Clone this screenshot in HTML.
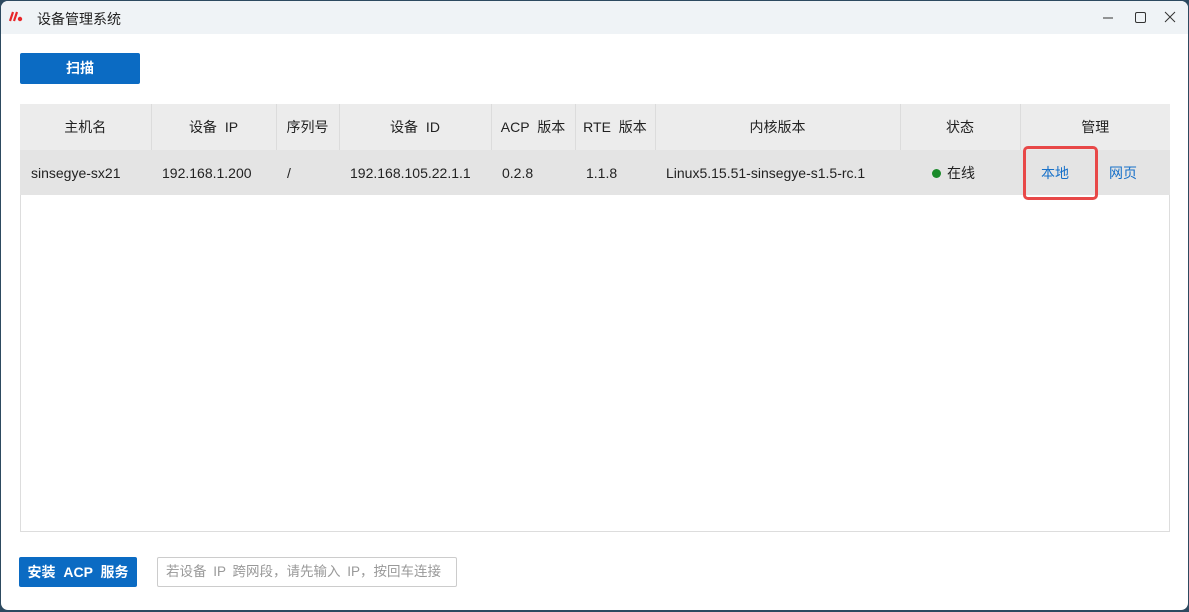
<!DOCTYPE html>
<html><head><meta charset="utf-8"><style>
*{margin:0;padding:0;box-sizing:border-box}
body{width:1189px;height:612px;background:#2d4a60;font-family:"Liberation Sans","Noto Sans CJK SC",sans-serif;overflow:hidden;position:relative}
.win{position:absolute;left:1px;top:1px;width:1187px;height:609px;background:#fff;border-radius:7px;overflow:hidden}
.title{height:33px;background:#eff3f6;position:relative;font-size:14px;color:#222}
.title .t{position:absolute;left:36px;top:8px}
.btn{position:absolute;background:#0b6bc3;color:#fff;font-size:14px;font-weight:bold;border-radius:2px;text-align:center;word-spacing:4px}
table{position:absolute;left:19px;top:103px;width:1150px;border-collapse:collapse;font-size:14px;color:#222;word-spacing:4px}
.tbl{position:absolute;left:19px;top:103px;width:1150px;height:428px;border:1px solid #ddd}
th{background:#ececec;font-weight:normal;height:46px;border-right:1px solid #dcdcdc;text-align:center}
td{background:#e4e4e4;height:45px;padding-left:11px}
a{color:#1670c9;text-decoration:none}
</style></head><body><div class="win">
<div class="title"><svg style="position:absolute;left:8px;top:10px" width="16" height="12" viewBox="0 0 16 12"><path d="M4 1L1 10M8 1L5 10" stroke="#e8262a" stroke-width="2.2"/><circle cx="11" cy="8" r="2.2" fill="#e8262a"/></svg><span class="t">设备管理系统</span>
<svg style="position:absolute;left:1098px;top:10px" width="80" height="14"><path d="M4 7h10" stroke="#333"/><rect x="36.5" y="1.5" width="10" height="10" rx="1.5" fill="none" stroke="#333"/><path d="M66 1l10 10M76 1l-10 10" stroke="#333"/></svg></div>
<div class="btn" style="left:19px;top:52px;width:120px;height:31px;line-height:31px">扫描</div>
<div class="tbl"></div>
<table><tr><th style="width:131px">主机名</th><th style="width:125px">设备 IP</th><th style="width:63px">序列号</th><th style="width:152px">设备 ID</th><th style="width:84px">ACP 版本</th><th style="width:80px">RTE 版本</th><th style="width:245px">内核版本</th><th style="width:120px">状态</th><th style="border-right:none">管理</th></tr>
<tr><td>sinsegye-sx21</td><td>192.168.1.200</td><td>/</td><td>192.168.105.22.1.1</td><td>0.2.8</td><td>1.1.8</td><td>Linux5.15.51-sinsegye-s1.5-rc.1</td><td style="padding-left:32px"><span style="display:inline-block;width:9px;height:9px;border-radius:50%;background:#1a8a2a;margin-right:6px"></span>在线</td><td style="position:relative"><div style="position:absolute;left:3px;top:-4px;width:75px;height:54px;border:3px solid #e84848;border-radius:5px"></div><a style="margin-left:10px">本地</a><a style="margin-left:40px">网页</a></td></tr></table>
<div class="btn" style="left:18px;top:556px;width:118px;height:30px;line-height:30px">安装 ACP 服务</div>
<div style="position:absolute;left:156px;top:556px;width:300px;height:30px;border:1px solid #ccc;border-radius:2px;font-size:13.5px;color:#999;line-height:28px;padding-left:8px;word-spacing:3px">若设备 IP 跨网段，请先输入 IP，按回车连接</div>
</div></body></html>
